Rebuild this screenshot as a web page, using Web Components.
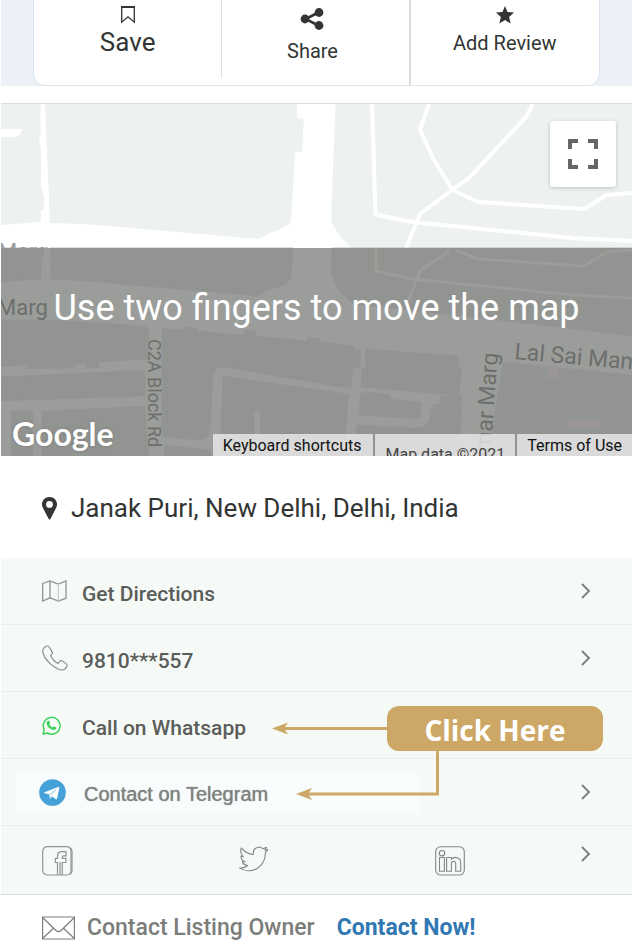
<!DOCTYPE html>
<html lang="en">
<head>
<meta charset="utf-8">
<meta name="viewport" content="width=device-width, initial-scale=1">
<title>Janak Puri listing</title>
<style>
	body {
		margin: 0;
		background: #fff;
		font-family: Roboto, "Liberation Sans", sans-serif;
		color: #323533;
	}
</style>
</head>
<body>
<listing-page></listing-page>

<script>
const icons = {
	bookmark: `<svg width="16" height="18" viewBox="0 0 16 18" fill="none" stroke="#323533"><path d="M1.7 1v15.2L8 10.8l6.3 5.4V1z" stroke-width="1.3"/><path d="M1 1h14" stroke-width="2"/></svg>`,
	share: `<svg width="24" height="22" viewBox="0 0 24 22" fill="#323533"><path d="M18.500 4.500 5.500 11l13 6.500" fill="none" stroke="#323533" stroke-width="2.600"/><circle cx="5" cy="11" r="4.400"/><circle cx="19" cy="4.500" r="4.400"/><circle cx="19" cy="17.500" r="4.400"/></svg>`,
	star: `<svg width="18" height="18" viewBox="0 0 18 18" fill="#323533"><path d="M9 0l2.500 6 6.500.6-4.900 4.300 1.500 6.600L9 14.100l-5.600 3.400 1.500-6.600L0 6.600 6.500 6z"/></svg>`,
	pin: `<svg width="16" height="23" viewBox="0 0 16 23" fill="#323533"><path fill-rule="evenodd" d="M7.500 0C3.200 0 0 3.100 0 7.300c0 2.200.8 3.400 1.600 5L6.700 22c.4.8 1.300.8 1.700 0l5-9.700c.8-1.600 1.600-2.800 1.600-5C15 3.100 11.800 0 7.500 0zm0 4a3.400 3.400 0 1 1 0 6.800 3.400 3.400 0 0 1 0-6.800z"/></svg>`,
	map: `<svg width="25" height="22" viewBox="0 0 25 22" fill="none" stroke="#929492" stroke-width="1.300"><path d="M.7 3.500 8 1l8.300 3L24 .9v17.300L16.300 21 8 17.800.7 21z"/><path d="M8 1v17"/><path d="M16.300 4v17" stroke="#c9ccca"/></svg>`,
	phone: `<svg width="26" height="26" viewBox="0 0 26 26" fill="none" stroke="#858785" stroke-width="1.100" stroke-linejoin="round"><path d="M5.200.8C3.500 1.100.6 3.700.7 5.600c.2 5.200 4.600 10.500 8.300 13.700 3.500 3 7.500 5.600 11.100 5.700 1.700 0 3.900-1.700 4.900-4 .4-1-.2-1.600-.8-2.100l-3.900-3c-1-.7-2-.4-2.700.6l-1.400 2c-2.500-1.300-6.200-4.900-7.600-8.300 1.500-.9 2.500-1.400 1.800-2.800L7.200 2C6.700 1.100 6.200.6 5.200.8z"/></svg>`,
	whatsapp: `<svg width="19" height="19" viewBox="0 0 19 19"><path d="M1 18l1.200-4.500A8.400 8.400 0 1 1 5.500 17z" fill="none" stroke="#3fd15c" stroke-width="1.500" stroke-linejoin="round"/><path d="M6.700 4.700c.4 0 .6.200.8.700l.6 1.500c.2.500-.5 1-.8 1.400.8 1.600 2 2.600 3.500 3.200.5-.4.900-1.300 1.400-1.100l1.700.8c.5.300.4 1.100 0 1.700-.6.900-1.900 1.200-3 .9-3.100-.8-5.300-3-6.100-5.400-.4-1.300 0-2.700.8-3.400.3-.2.700-.3 1.100-.3z" fill="#3fd15c"/></svg>`,
	telegram: `<svg width="27" height="27" viewBox="0 0 27 27"><circle cx="13.500" cy="13.500" r="13.300" fill="#45a2d9"/><path d="M5.500 13.300 19.300 8c.8-.3 1.200.2 1 .9l-2.200 10.600c-.2.9-.8 1-1.500.5l-3.300-2.400-1.700 1.600c-.5.500-.8.300-.9-.3l-.6-3.700-4.600-.9c-.5-.3-.5-.7 0-1z" fill="#fff"/><path d="M10.400 15.300 17 10.700l-5.200 5.600-.5 2.600" fill="none" stroke="#8fc7e8" stroke-width=".7"/></svg>`,
	facebook: `<svg width="31" height="30" viewBox="0 0 31 30" fill="none" stroke="#929492" stroke-width="1.200"><rect x=".7" y=".7" width="28.300" height="28.300" rx="4.500"/><path d="M27.500 1.500q2.500 1 2.500 4v19q0 3-2.500 4"/><path d="M15.500 29V16.500h-2.200v-4.200h2.200V10q0-4.300 4.500-4.300h4v4.100h-2.300q-1.500 0-1.500 1.500v1h3.700v4.200h-3.700V29M18 29V16"/></svg>`,
	twitter: `<svg width="30" height="26" viewBox="0 0 30 26" fill="none" stroke="#858785" stroke-width="1.100" stroke-linejoin="round"><path d="M14.300 8.500C14 4 16.500 1.500 19.500 1.200c2-.2 3.300.6 4.400 1.600l3.700-1.600-1.700 3 3.100-.7-2.700 3.400C26.600 16.500 19.500 24.500 10 24.700c-3.500.1-6.500-.8-9.300-2.800 3.300.2 6-.6 8-2.400-2.700-.3-4.500-1.500-5.300-3.800h2.500c-2.500-1-4-2.900-4-5.700l2.500.8C2 8.400 1.100 5 2.300 1.900c3.200 3.900 7 6.200 12 6.600z"/></svg>`,
	linkedin: `<svg width="30" height="30" viewBox="0 0 30 30" fill="none" stroke="#858785" stroke-width="1.100"><rect x=".7" y=".7" width="28.600" height="28.300" rx="5"/><circle cx="7" cy="7.200" r="2.700"/><path d="M4.500 11.500h4.900v13.700H4.500zM11.600 11.500h4.700v1.700c3-3.200 9.400-2.100 9.400 3.600v8.400h-5v-7.400c0-3.600-4.300-3.200-4.300.2v7.200h-4.800z"/></svg>`,
	envelope: `<svg width="33" height="24" viewBox="0 0 33 24" fill="none" stroke="#7c7e7c" stroke-width="1.200"><path d="M.6 1h31.800v22H.6z"/><path d="M.6 1.500 14 14.500q2.500 2.200 5 0L32.400 1.500M.6 22.500 11.500 12.200M32.400 22.500 21.500 12.200"/></svg>`,
	chevron: `<svg width="10" height="16" viewBox="0 0 10 16" fill="none" stroke="#7b7d7b" stroke-width="1.800"><path d="M1 1l7 7-7 7"/></svg>`,
	fullscreen: `<svg width="30" height="30" viewBox="0 0 30 30" fill="none" stroke="#666" stroke-width="4"><path d="M2 10V2h8M20 2h8v8M28 20v8h-8M10 28H2v-8"/></svg>`
};

class ListingIcon extends HTMLElement {
	constructor() {
		super();
		this.attachShadow({ mode: 'open' });
	}

	connectedCallback() {
		this.shadowRoot.innerHTML = `
			<style>
				:host { display: block; flex: none; }
				svg { display: block; }
			</style>
			${icons[this.getAttribute('name')]}
		`;
	}
}

class ListingAction extends HTMLElement {
	constructor() {
		super();
		this.attachShadow({ mode: 'open' });
		this.shadowRoot.innerHTML = `
			<style>
				:host {
					display: block;
					font-size: 20px;
					line-height: 24px;
				}
				button {
					width: 100%;
					display: flex;
					flex-direction: column;
					align-items: center;
					gap: 7px;
					padding: 6px 0;
					border: 0;
					background: none;
					color: inherit;
					font: inherit;
					cursor: pointer;
				}
				:host([large]) {
					font-size: 26px;
					line-height: 32px;
				}
				:host([large]) button { gap: 2px; }
				:host([roomy]) button {
					gap: 9px;
					padding: 8px 6px 0 0;
				}
			</style>
			<button type="button"><slot name="icon"></slot><slot></slot></button>
		`;
	}
}

class ActionBar extends HTMLElement {
	constructor() {
		super();
		this.attachShadow({ mode: 'open' });
		this.shadowRoot.innerHTML = `
			<style>
				:host {
					display: block;
					padding: 0 32px;
					background: #edf1f7;
				}
				.card {
					display: grid;
					grid-template-columns: repeat(3, 1fr);
					height: 85px;
					border: 1px solid #dae5ef;
					border-top: 0;
					border-radius: 0 0 12px 12px;
					background: #fff;
				}
				::slotted(:nth-child(1)) {
					margin-bottom: 7px;
					border-right: 1px solid #dcdede;
				}
				::slotted(:nth-child(2)) { border-right: 2px solid #dcdede; }
			</style>
			<div class="card"><slot></slot></div>
		`;
	}
}

class ListingMap extends HTMLElement {
	constructor() {
		super();
		this.attachShadow({ mode: 'open' });
		this.shadowRoot.innerHTML = `
			<style>
				:host {
					display: block;
					position: relative;
					height: 352px;
					margin-top: 17px;
					border-top: 1px solid #dcdedd;
					overflow: hidden;
				}
				.tiles {
					display: block;
					width: 100%;
					height: 100%;
				}
				.fullscreen {
					position: absolute;
					top: 17px;
					right: 16px;
					display: grid;
					place-items: center;
					width: 66px;
					height: 66px;
					padding: 0;
					border: 0;
					border-radius: 3px;
					background: #fff;
					box-shadow: 0 1px 4px rgba(0, 0, 0, .2);
				}
				.hint {
					position: absolute;
					top: 182px;
					left: 0;
					right: 0;
					margin: 0;
					text-align: center;
					font-size: 36px;
					line-height: 44px;
					color: #fff;
					white-space: nowrap;
				}
				.logo {
					position: absolute;
					left: 11px;
					bottom: 2px;
					font: bold 32px/40px Lato, sans-serif;
					color: #fff;
					text-decoration: none;
					text-shadow: 0 0 3px #777;
				}
				.legal {
					position: absolute;
					right: 0;
					bottom: 0;
					display: flex;
					height: 22px;
					font-size: 16px;
					line-height: 24px;
					overflow: hidden;
				}
				.legal > * {
					box-sizing: border-box;
					padding: 0 10px;
					border: 0;
					border-left: 2px solid #929492;
					background: rgba(235, 235, 235, .8);
					color: #111;
					font: inherit;
					text-decoration: none;
				}
				.legal > :first-child {
					padding: 0 12px 0 10px;
					border-left: 0;
				}
				.legal span {
					padding-top: 9px;
					color: #444;
				}
			</style>
			<svg class="tiles" viewBox="1 104 631 352" preserveAspectRatio="xMidYMin slice" font-family="Roboto, sans-serif">
				<rect x="0" y="104" width="633" height="144" fill="#fff"/>
				<g fill="#edf2ef">
					<path d="M0 104h40.500v31l-1 1v10l1.500 1v39l3 13v11h-3v12L0 225v-88h17l4-4v-4H0z"/>
					<path d="M45 104h252v14l7 1-2 33h-7l-4 70-6 5-15 6-11 6-12-1-162-14-35-1z"/>
					<path d="M335.500 104H633v144H352l-12-11-9-16z"/>
				</g>
				<g fill="none" stroke="#fff" stroke-width="4">
					<path d="M372 104l3.500 110.500L412 222l161 16 60 3"/>
					<path d="M429 104l-9 26 13 28 19.500 32 25.500 12 106 7 23-14 26-2"/>
					<path d="M533 104l-7 13-57 61-17 12-32 24-14 34"/>
				</g>
				<text x="-2" y="259" font-size="22" fill="#9a9c9a">Marg</text>

				<!-- dimmed lower half -->
				<rect x="0" y="248" width="633" height="208" fill="#9b9d9a"/>
				<g fill="#929491" stroke="#969398" stroke-width=".6">
					<path d="M0 248h44l-3 20v11l-41 3z"/>
					<path d="M50 248h243l-2 31-6 6-17 5-10 6-173-15-34-2z"/>
					<path d="M332 248h301v88l-128-15-132-15-18-1-15-13-9-17z"/>
					<path d="M0 320h50l70 4 27 3 2 5v27l-50 3v6H86l-1-5-10 1v4l-48 1v-4l-27 2z"/>
					<path d="M0 377l145-7v26L0 401z"/>
					<path d="M11 411h22v45H11zM42 411l103-5 4 50H42z"/>
					<path d="M162 328l20 2 2-3 13 1 1 3 45 4 1-5 12 1v5l51 5v-4l12 1v3l35 5v3l7 1-1 17-7 1-2 21-127-22q-10-1-11 10l-3 53q-1 11-12 10l-36-3z"/>
					<path d="M223 376l90 13 36 5-6 62h-83v-44q-3-5-6 0v44h-34z"/>
					<path d="M164 445l47 5v6h-47zM365 349l94 7-1 10 4 2-3 28-98-9 1-19 4-1z"/>
					<path d="M360 393h6l1-1 23 3v4l31 3v13q-1 4-6 4l-56-4zM357 425l60 3q12 0 13-13l2-10 7-1 1-8h22l-2 60H355z"/>
					<path d="M503 362l130 13v81H488z"/>
				</g>
				<path d="M548 366l10 1-1 12h-10zM567 420h34v8h-34z" fill="#999599"/>
				<g fill="none" stroke="#9b9d9a" stroke-width="3">
					<path d="M376 248v23l36 8 161 16 60 3M456 250l22 9 106 7 23-14 26-2M450 250l-30 21-14 35"/>
				</g>
				<g fill="#6d6f6c" font-size="23" stroke="#9b9d9a" stroke-width="2" paint-order="stroke">
					<text x="-3" y="315" font-size="22">Marg</text>
					<text x="514" y="359" transform="rotate(5 514 359)">Lal Sai Mandir Marg</text>
					<text x="148" y="339" font-size="18" transform="rotate(90 148 339)">C2A Block Rd</text>
					<text x="489" y="479" transform="rotate(-86 489 479)">Kumar Marg</text>
				</g>
			</svg>
			<button class="fullscreen" type="button" aria-label="Toggle fullscreen view"><listing-icon name="fullscreen"></listing-icon></button>
			<p class="hint"><slot></slot></p>
			<a class="logo" href="#map">Google</a>
			<div class="legal">
				<button type="button">Keyboard shortcuts</button>
				<span>Map data ©2021</span>
				<a href="#terms">Terms of Use</a>
			</div>
		`;
	}
}

class ContactRow extends HTMLElement {
	constructor() {
		super();
		this.attachShadow({ mode: 'open' });
	}

	connectedCallback() {
		this.shadowRoot.innerHTML = `
			<style>
				:host {
					display: block;
					border-bottom: 1px solid #ebefec;
				}
				a {
					display: grid;
					grid-template-columns: 40px 1fr auto;
					align-items: center;
					height: 66px;
					padding: 0 41px;
					color: #5b5d5a;
					font-size: 21px;
					font-weight: 500;
					line-height: 26px;
					text-decoration: none;
				}
				.label { padding-top: 6px; }
				:host([telegram]) a {
					grid-template-columns: 45px 1fr auto;
					padding-left: 38px;
					background: linear-gradient(#f8fcfc, #f8fcfc) 15px 14px / 404px 41px no-repeat;
					color: #80827f;
					font: 20px/26px "Liberation Sans", sans-serif;
					text-shadow: 0 0 1px #80827f;
				}
				:host([telegram]) .label { padding-top: 4px; }
			</style>
			<a href="${this.getAttribute('href')}">
				<listing-icon name="${this.getAttribute('icon')}"></listing-icon>
				<span class="label"><slot></slot></span>
				<listing-icon name="chevron"></listing-icon>
			</a>
		`;
	}
}

class SocialRow extends HTMLElement {
	constructor() {
		super();
		this.attachShadow({ mode: 'open' });
		this.shadowRoot.innerHTML = `
			<style>
				:host {
					display: grid;
					grid-template-columns: repeat(3, 1fr);
					padding: 20px 0 18px 41px;
					border-bottom: 1px solid #d9dddb;
				}
				div {
					display: flex;
					justify-content: space-between;
					height: 30px;
					padding-right: 41px;
				}
			</style>
			<div><a href="#facebook" aria-label="Facebook"><listing-icon name="facebook"></listing-icon></a></div>
			<div><a href="#twitter" aria-label="Twitter"><listing-icon name="twitter"></listing-icon></a></div>
			<div>
				<a href="#linkedin" aria-label="LinkedIn"><listing-icon name="linkedin"></listing-icon></a>
				<listing-icon name="chevron"></listing-icon>
			</div>
		`;
	}
}

class ClickCallout extends HTMLElement {
	constructor() {
		super();
		this.attachShadow({ mode: 'open' });
		this.shadowRoot.innerHTML = `
			<style>
				:host {
					position: absolute;
					top: 148px;
					right: 29px;
					display: flex;
					align-items: flex-start;
				}
				svg {
					display: block;
					margin-right: -53px;
				}
				button {
					position: relative;
					width: 216px;
					height: 45px;
					padding: 3px 0 0;
					border: 0;
					border-radius: 12px;
					background: #cda766;
					color: #fff;
					font: bold 28px/40px "Open Sans", "Noto Sans", sans-serif;
				}
			</style>
			<svg width="168" height="96" viewBox="0 0 168 96" fill="none" stroke="#cda766" stroke-width="3">
				<path d="M12 22.500h110M36 88h129.500V40"/>
				<path d="M0 22.500l16-6-4 6 4 6zM24 88l16-6-4 6 4 6z" fill="#cda766" stroke="none"/>
			</svg>
			<button type="button"><slot></slot></button>
		`;
	}
}

class ListingPage extends HTMLElement {
	constructor() {
		super();
		this.attachShadow({ mode: 'open' });
		this.shadowRoot.innerHTML = `
			<style>
				:host {
					display: block;
					padding: 0 1px;
				}
				.address {
					display: flex;
					align-items: center;
					gap: 13px;
					padding: 36px 41px 34px;
					font-size: 26px;
					line-height: 32px;
				}
				.contacts {
					position: relative;
					background: #f6faf7;
				}
				.owner {
					display: flex;
					align-items: center;
					padding: 20px 41px 0;
					font-size: 23px;
					font-weight: 500;
					line-height: 26px;
					color: #7b7d7a;
				}
				.owner span { padding: 0 22px 0 12px; }
				.owner a {
					color: #3278b3;
					font-weight: 700;
					text-decoration: none;
				}
			</style>
			<action-bar>
				<listing-action large><listing-icon slot="icon" name="bookmark"></listing-icon>Save</listing-action>
				<listing-action roomy><listing-icon slot="icon" name="share"></listing-icon>Share</listing-action>
				<listing-action><listing-icon slot="icon" name="star"></listing-icon>Add Review</listing-action>
			</action-bar>
			<listing-map>Use two fingers to move the map</listing-map>
			<div class="address"><listing-icon name="pin"></listing-icon>Janak Puri, New Delhi, Delhi, India</div>
			<div class="contacts">
				<contact-row icon="map" href="#directions">Get Directions</contact-row>
				<contact-row icon="phone" href="#phone">9810***557</contact-row>
				<contact-row icon="whatsapp" href="#whatsapp">Call on Whatsapp</contact-row>
				<contact-row icon="telegram" href="#telegram" telegram>Contact on Telegram</contact-row>
				<social-row></social-row>
				<click-callout>Click Here</click-callout>
			</div>
			<div class="owner">
				<listing-icon name="envelope"></listing-icon>
				<span>Contact Listing Owner</span>
				<a href="#contact">Contact Now!</a>
			</div>
		`;
	}
}

customElements.define('listing-icon', ListingIcon);
customElements.define('listing-action', ListingAction);
customElements.define('action-bar', ActionBar);
customElements.define('listing-map', ListingMap);
customElements.define('contact-row', ContactRow);
customElements.define('social-row', SocialRow);
customElements.define('click-callout', ClickCallout);
customElements.define('listing-page', ListingPage);
</script>
</body>
</html>
